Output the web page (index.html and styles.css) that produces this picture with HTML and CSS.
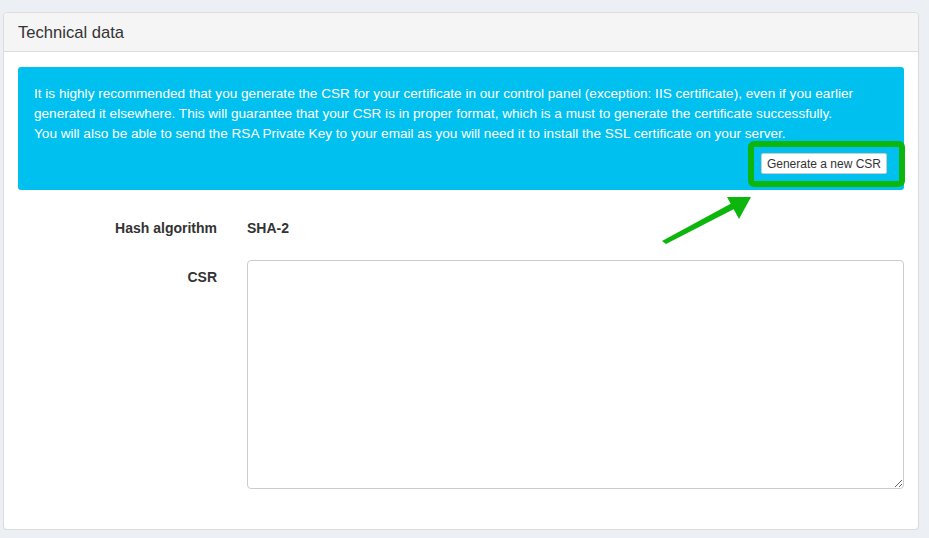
FILE: index.html
```html
<!DOCTYPE html>
<html lang="en">
<head>
    <meta charset="UTF-8">
    <meta name="viewport" content="width=device-width, initial-scale=1.0">
    <title>Technical data</title>
    <link rel="stylesheet" href="styles.css">
</head>
<body>
    <div class="panel">
        <div class="panel-heading">Technical data</div>

        <div class="panel-body">
            <div class="alert-info">
                <p>It is highly recommended that you generate the CSR for your certificate in our control panel (exception: IIS certificate), even if you earlier<br>
                generated it elsewhere. This will guarantee that your CSR is in proper format, which is a must to generate the certificate successfully.<br>
                You will also be able to send the RSA Private Key to your email as you will need it to install the SSL certificate on your server.</p>
                <div class="alert-actions">
                    <button type="button" class="btn-default">Generate a new CSR</button>
                </div>
            </div>

            <form class="form-horizontal">
                <div class="form-row">
                    <label class="control-label">Hash algorithm</label>
                    <div class="static-value">SHA-2</div>
                </div>
                <div class="form-row">
                    <label class="control-label" for="csr">CSR</label>
                    <textarea id="csr" class="form-control"></textarea>
                </div>
            </form>
        </div>

        <!-- highlight box and pointer drawn over the panel -->
        <svg class="callout" width="929" height="538" viewBox="0 0 929 538">
            <rect x="751" y="144" width="151" height="40" rx="3" fill="none" stroke="#0cb60c" stroke-width="6"/>
            <polygon points="662,241 666,244 736,208 732,203" fill="#0cb60c"/>
            <polygon points="751,197 727,197 739,219" fill="#0cb60c"/>
        </svg>
    </div>
</body>
</html>
```

FILE: styles.css
```css
body {
    margin: 0;
    padding: 12px 10px 0 3px;
    background-color: #ecf0f5;
    font-family: "Liberation Sans", Arial, Helvetica, sans-serif;
    color: #333;
}
.panel {
    background-color: #fff;
    border: 1px solid #dcdcdc;
    border-radius: 4px;
    box-shadow: 0 1px 1px rgba(0, 0, 0, 0.05);
}
.panel-heading {
    height: 38px;
    line-height: 39px;
    padding: 0 14px;
    background-color: #f5f5f5;
    border-bottom: 1px solid #ddd;
    border-radius: 4px 4px 0 0;
    font-size: 16.6px;
}
.panel-body { padding: 15px 14px 40px; }
.alert-info {
    background-color: #00c0ef;
    color: #fff;
    border-radius: 3px;
    padding: 17px 16px 16px;
    font-size: 13.6px;
    line-height: 20px;
    white-space: nowrap;
}
.alert-info p { margin: 0; }
.alert-actions {
    display: flex;
    justify-content: flex-end;
    margin-top: 9px;
    padding-right: 1px;
}
.btn-default {
    font-family: inherit;
    font-size: 12px;
    color: #333;
    background-color: #fff;
    border: 1px solid #ccc;
    border-radius: 2px;
    height: 21px;
    padding: 0 5px;
}
.form-horizontal { margin-top: 28px; }
.form-row {
    display: grid;
    grid-template-columns: 199px 1fr;
    column-gap: 30px;
    margin-bottom: 22px;
}
.form-row:last-child { margin-bottom: 0; }
.control-label {
    text-align: right;
    font-weight: bold;
    font-size: 14px;
    line-height: 20px;
}
.form-row:last-child .control-label { padding-top: 7px; }
.static-value {
    font-weight: bold;
    font-size: 14px;
    line-height: 20px;
}
.form-control {
    display: block;
    box-sizing: border-box;
    width: 100%;
    height: 229px;
    border: 1px solid #ccc;
    border-radius: 4px;
    padding: 6px 12px;
    font-family: inherit;
    font-size: 14px;
}
.callout {
    position: absolute;
    top: 0;
    left: 0;
    pointer-events: none;
}
```
